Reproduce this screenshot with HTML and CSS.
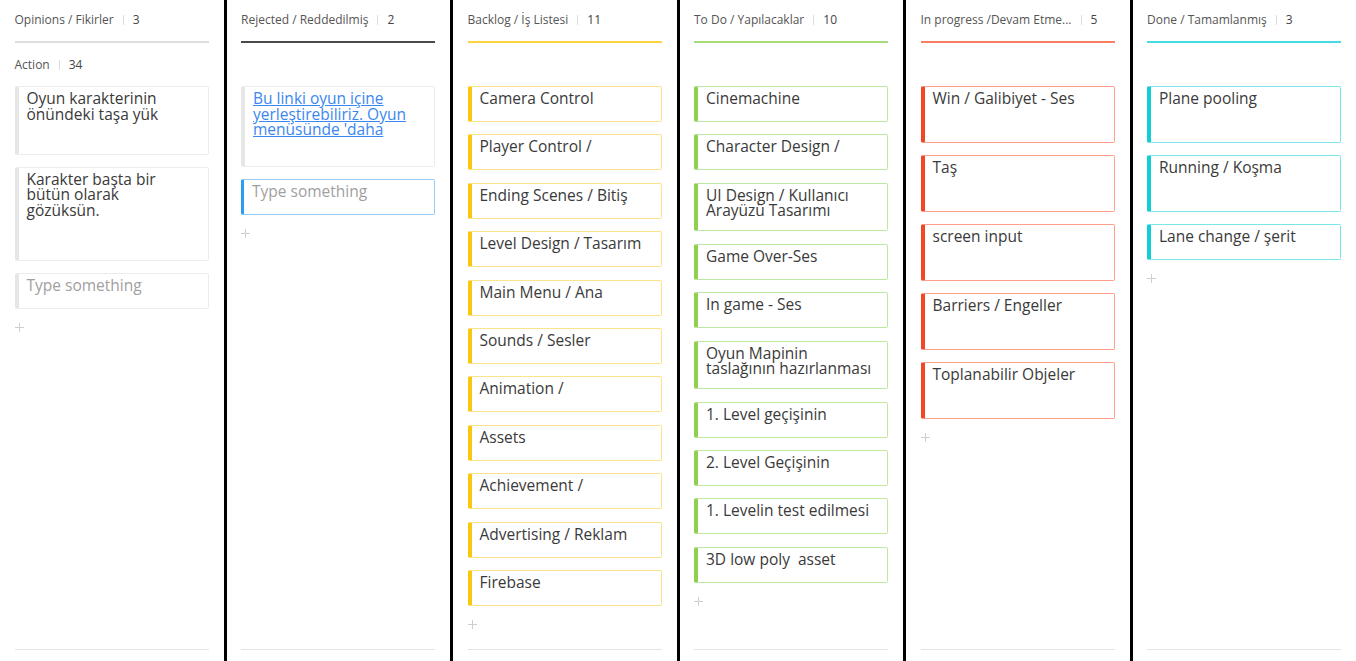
FILE: index.html
```html
<!DOCTYPE html>
<html lang="tr">
<head>
<meta charset="utf-8">
<title>Kanban</title>
<link rel="stylesheet" href="styles.css">
</head>
<body>
<div class="board">

  <section class="col col-grey">
    <header class="col-head"><span class="title">Opinions / Fikirler</span><span class="sep"></span><span class="count">3</span></header>
    <div class="lane-head"><span class="title">Action</span><span class="sep"></span><span class="count">34</span></div>
    <div class="cards">
      <div class="card h69">Oyun karakterinin önündeki taşa yük</div>
      <div class="card h94">Karakter başta bir bütün olarak gözüksün.</div>
      <div class="card placeholder">Type something</div>
      <div class="add"><svg width="9" height="9" viewBox="0 0 9 9"><path d="M4.5 0v9M0 4.5h9" stroke="#cfcfcf" stroke-width="1"/></svg></div>
    </div>
    <div class="col-foot"></div>
  </section>

  <section class="col col-dark">
    <header class="col-head"><span class="title">Rejected / Reddedilmiş</span><span class="sep"></span><span class="count">2</span></header>
    <div class="lane-head"></div>
    <div class="cards">
      <div class="card h81"><a class="link" href="#">Bu linki oyun içine yerleştirebiliriz. Oyun menüsünde 'daha</a></div>
      <div class="card placeholder focus">Type something</div>
      <div class="add"><svg width="9" height="9" viewBox="0 0 9 9"><path d="M4.5 0v9M0 4.5h9" stroke="#cfcfcf" stroke-width="1"/></svg></div>
    </div>
    <div class="col-foot"></div>
  </section>

  <section class="col col-yellow">
    <header class="col-head"><span class="title">Backlog / İş Listesi</span><span class="sep"></span><span class="count">11</span></header>
    <div class="lane-head"></div>
    <div class="cards">
      <div class="card">Camera Control</div>
      <div class="card">Player Control /</div>
      <div class="card">Ending Scenes / Bitiş</div>
      <div class="card">Level Design / Tasarım</div>
      <div class="card">Main Menu / Ana</div>
      <div class="card">Sounds / Sesler</div>
      <div class="card">Animation /</div>
      <div class="card">Assets</div>
      <div class="card">Achievement /</div>
      <div class="card">Advertising / Reklam</div>
      <div class="card">Firebase</div>
      <div class="add"><svg width="9" height="9" viewBox="0 0 9 9"><path d="M4.5 0v9M0 4.5h9" stroke="#cfcfcf" stroke-width="1"/></svg></div>
    </div>
    <div class="col-foot"></div>
  </section>

  <section class="col col-green">
    <header class="col-head"><span class="title">To Do / Yapılacaklar</span><span class="sep"></span><span class="count">10</span></header>
    <div class="lane-head"></div>
    <div class="cards">
      <div class="card">Cinemachine</div>
      <div class="card">Character Design /</div>
      <div class="card">UI Design / Kullanıcı Arayüzü Tasarımı</div>
      <div class="card">Game Over-Ses</div>
      <div class="card">In game - Ses</div>
      <div class="card">Oyun Mapinin taslağının hazırlanması</div>
      <div class="card">1. Level geçişinin</div>
      <div class="card">2. Level Geçişinin</div>
      <div class="card">1. Levelin test edilmesi</div>
      <div class="card">3D low poly&nbsp; asset</div>
      <div class="add"><svg width="9" height="9" viewBox="0 0 9 9"><path d="M4.5 0v9M0 4.5h9" stroke="#cfcfcf" stroke-width="1"/></svg></div>
    </div>
    <div class="col-foot"></div>
  </section>

  <section class="col col-red">
    <header class="col-head"><span class="title">In progress /Devam Etme...</span><span class="sep"></span><span class="count">5</span></header>
    <div class="lane-head"></div>
    <div class="cards">
      <div class="card h57">Win / Galibiyet - Ses</div>
      <div class="card h57">Taş</div>
      <div class="card h57">screen input</div>
      <div class="card h57">Barriers / Engeller</div>
      <div class="card h57">Toplanabilir Objeler</div>
      <div class="add"><svg width="9" height="9" viewBox="0 0 9 9"><path d="M4.5 0v9M0 4.5h9" stroke="#cfcfcf" stroke-width="1"/></svg></div>
    </div>
    <div class="col-foot"></div>
  </section>

  <section class="col col-cyan">
    <header class="col-head"><span class="title">Done / Tamamlanmış</span><span class="sep"></span><span class="count">3</span></header>
    <div class="lane-head"></div>
    <div class="cards">
      <div class="card h57">Plane pooling</div>
      <div class="card h57">Running / Koşma</div>
      <div class="card">Lane change / şerit</div>
      <div class="add"><svg width="9" height="9" viewBox="0 0 9 9"><path d="M4.5 0v9M0 4.5h9" stroke="#cfcfcf" stroke-width="1"/></svg></div>
    </div>
    <div class="col-foot"></div>
  </section>

</div>
</body>
</html>
```

FILE: styles.css
```css
html, body {
  margin: 0;
  padding: 0;
  background: #ffffff;
}

body {
  font-family: "Open Sans", "Liberation Sans", sans-serif;
  color: #3b3b3b;
}

.board {
  display: flex;
  height: 661px;
  overflow: hidden;
}

.col {
  flex: 1 1 0;
  min-width: 0;
  display: flex;
  flex-direction: column;
  padding: 0 15px 0 14.5px;
  --line: #dedede;
  --cl: #e6e6e6;
  --cb: #ececec;
}

.col + .col {
  border-left: 3px solid #000;
}

.col-dark { --line: #4a4a4a; --cl: #e6e6e6; --cb: #ececec; }
.col-yellow { --line: #fdd33f; --cl: #fac710; --cb: #fde38a; }
.col-green { --line: #a6dd7c; --cl: #8fd14f; --cb: #bde8a0; }
.col-red { --line: #fb7d62; --cl: #f24726; --cb: #ff9f8c; }
.col-cyan { --line: #45dde2; --cl: #12cdd4; --cb: #7ce5e9; }

.col-head {
  height: 29px;
  padding-top: 12px;
  border-bottom: 2px solid var(--line);
  display: flex;
  align-items: flex-start;
  font-size: 12px;
  line-height: 16px;
  color: #555;
}

.lane-head {
  height: 29px;
  padding-top: 14px;
  display: flex;
  align-items: flex-start;
  font-size: 12px;
  line-height: 16px;
  color: #555;
}

.title {
  white-space: nowrap;
}

.sep {
  width: 1px;
  height: 10px;
  margin: 3px 9px 0 9px;
  background: #dcdcdc;
  flex: none;
}

.count {
  color: #444;
}

.cards {
  flex: 1 1 auto;
  display: flex;
  flex-direction: column;
  gap: 12.4px;
}

.card {
  box-sizing: border-box;
  min-height: 36px;
  border: 1px solid var(--cb);
  border-left: 4px solid var(--cl);
  border-radius: 2px;
  padding: 4px 14.5px 11.6px 8px;
  font-size: 15.5px;
  line-height: 15.5px;
  color: #3a3a3a;
  overflow: hidden;
  flex: none;
}

.h57 { height: 56.6px; }
.h69 { height: 68.6px; }
.h81 { height: 80.6px; }
.h94 { height: 93.6px; }

.link {
  color: #3a87f2;
  text-decoration: underline;
}

.placeholder {
  color: #a0a0a0;
}

.placeholder.focus {
  --cl: #2d9bf0;
  --cb: #93caf6;
  border-left-width: 3px;
}

.add {
  height: 9px;
  margin-top: 1.6px;
  line-height: 0;
  flex: none;
}

.add svg {
  display: block;
}

.col-foot {
  height: 0;
  border-top: 1px solid #e4e4e4;
  margin-bottom: 11px;
}
```
